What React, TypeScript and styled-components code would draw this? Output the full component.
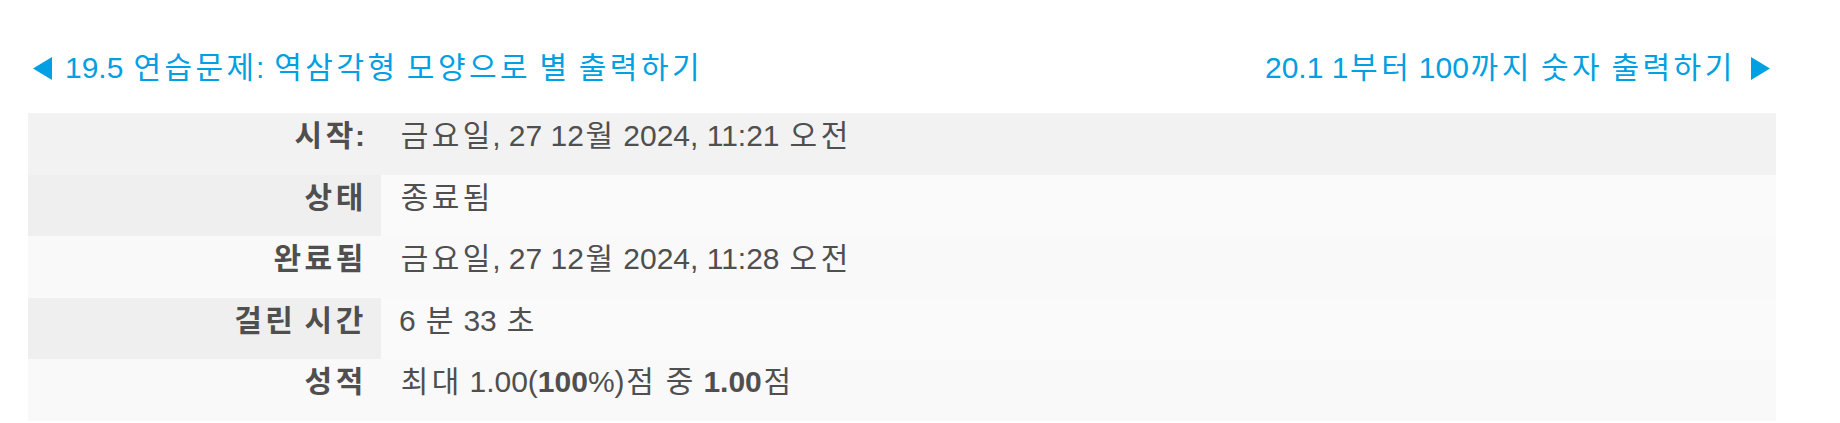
import React from "react";
import styled, { createGlobalStyle } from "styled-components";

const GlobalStyle = createGlobalStyle`
  html, body { margin: 0; padding: 0; background: #ffffff; }
  body { font-family: "Liberation Sans", Arial, "Noto Sans CJK KR", sans-serif; }
`;

const Page = styled.div`
  width: 1748px;
  padding: 45px 0 0 28px;
  box-sizing: content-box;
`;

const Nav = styled.nav`
  display: flex;
  justify-content: space-between;
  align-items: flex-start;
  height: 45px;
  margin-bottom: 23px;
`;

const NavLink = styled.a<{ $side: "prev" | "next" }>`
  display: inline-flex;
  align-items: center;
  gap: ${(p) => (p.$side === "prev" ? "13px" : "17px")};
  white-space: nowrap;
  font-size: 30px;
  line-height: 45px;
  color: #00a0e2;
  text-decoration: none;
  ${(p) => (p.$side === "prev" ? "padding-left: 5px;" : "padding-right: 6px;")}
`;

const LinkText = styled.span`
  white-space: nowrap;
  flex: none;
`;

const Arrow = styled.svg`
  width: 19px;
  height: 23px;
  flex: none;
  fill: currentColor;
  position: relative;
  top: 1px;
`;

const Hangul = styled.span`
  letter-spacing: 0.115em;
  margin-left: 0.057em;
  margin-right: -0.057em;
`;

const Summary = styled.table`
  width: 1748px;
  border-collapse: collapse;
  border-spacing: 0;
  font-size: 30px;
  color: #4f4f4f;
`;

type Tone = "band" | "split" | "plain";

const Row = styled.tr<{ $tone: Tone }>`
  height: 61.5px;
  background: ${(p) => (p.$tone === "band" ? "#f2f2f2" : "#fafafa")};
`;

const Head = styled.th<{ $tone: Tone }>`
  width: 353px;
  box-sizing: border-box;
  padding: 0 16px 0 0;
  text-align: right;
  vertical-align: top;
  line-height: 45px;
  font-weight: 700;
  white-space: nowrap;
  background: ${(p) =>
    p.$tone === "band" ? "#f2f2f2" : p.$tone === "split" ? "#efefef" : "#f9f9f9"};
`;

const Cell = styled.td<{ $tone: Tone }>`
  padding: 0 0 0 18px;
  text-align: left;
  vertical-align: top;
  line-height: 45px;
  white-space: nowrap;
  background: ${(p) =>
    p.$tone === "band" ? "#f2f2f2" : p.$tone === "split" ? "#fafafa" : "#f9f9f9"};
`;

const Strong = styled.b`
  font-weight: 700;
`;

function K({ children }: { children: string }) {
  const parts = children.split(/([\uac00-\ud7a3]+)/);
  return (
    <>
      {parts.map((part, i) =>
        /[\uac00-\ud7a3]/.test(part) ? <Hangul key={i}>{part}</Hangul> : <React.Fragment key={i}>{part}</React.Fragment>
      )}
    </>
  );
}

const rows: { label: string; value: React.ReactNode; tone: Tone }[] = [
  { label: "시작:", value: <K>금요일, 27 12월 2024, 11:21 오전</K>, tone: "band" },
  { label: "상태", value: <K>종료됨</K>, tone: "split" },
  { label: "완료됨", value: <K>금요일, 27 12월 2024, 11:28 오전</K>, tone: "plain" },
  { label: "걸린 시간", value: <K>6 분 33 초</K>, tone: "split" },
  {
    label: "성적",
    value: (
      <>
        <K>최대 1.00(</K>
        <Strong>100</Strong>
        <K>%)점 중 </K>
        <Strong>1.00</Strong>
        <K>점</K>
      </>
    ),
    tone: "plain",
  },
];

export default function App() {
  return (
    <>
      <GlobalStyle />
      <Page>
        <Nav>
          <NavLink href="#" $side="prev">
            <Arrow viewBox="0 0 19 23" aria-hidden="true">
              <polygon points="19,0 19,23 0,11.5" />
            </Arrow>
            <LinkText>
              <K>19.5 연습문제: 역삼각형 모양으로 별 출력하기</K>
            </LinkText>
          </NavLink>
          <NavLink href="#" $side="next">
            <LinkText>
              <K>20.1 1부터 100까지 숫자 출력하기</K>
            </LinkText>
            <Arrow viewBox="0 0 19 23" aria-hidden="true">
              <polygon points="0,0 19,11.5 0,23" />
            </Arrow>
          </NavLink>
        </Nav>
        <Summary>
          <tbody>
            {rows.map((r) => (
              <Row key={r.label} $tone={r.tone}>
                <Head scope="row" $tone={r.tone}>
                  <K>{r.label}</K>
                </Head>
                <Cell $tone={r.tone}>{r.value}</Cell>
              </Row>
            ))}
          </tbody>
        </Summary>
      </Page>
    </>
  );
}
